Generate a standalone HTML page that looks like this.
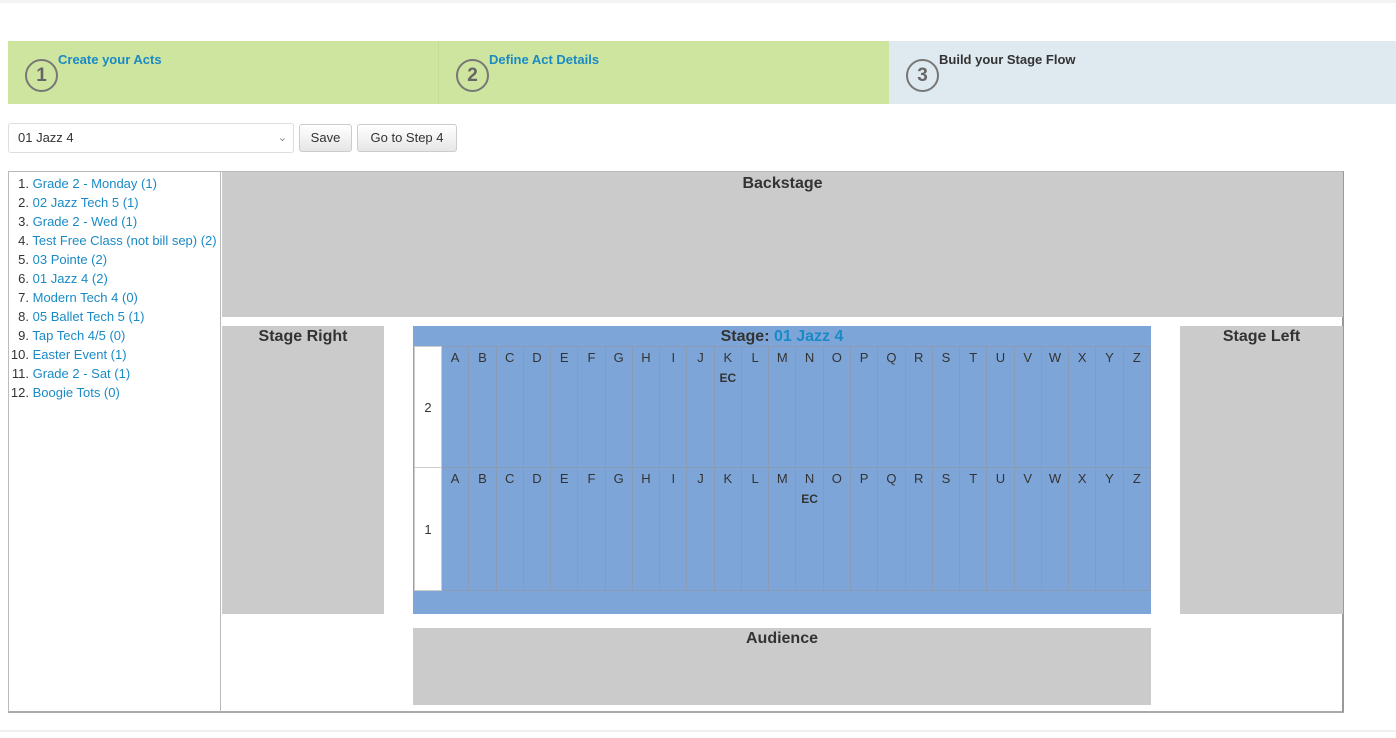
<!DOCTYPE html>
<html><head><meta charset="utf-8"><style>
*{box-sizing:border-box;margin:0;padding:0}
body{width:1396px;height:738px;background:#fff;font-family:"Liberation Sans",Arial,sans-serif;position:relative;overflow:hidden;color:#333}
.a{position:absolute}
.topline{left:0;top:0;width:1396px;height:3px;background:#f3f3f3}
.step{top:41px;height:63px}
.circ{width:33px;height:33px;border:2px solid #777;border-radius:50%;font-weight:bold;font-size:19px;color:#666;text-align:center;line-height:29px}
.stt{font-weight:bold;font-size:13px}
.btn{top:124px;height:28px;border:1px solid #ccc;border-radius:3px;background:linear-gradient(#fff,#e6e6e6);font-size:13px;text-align:center;line-height:26px;color:#333}
.grey{background:#cbcbcb;text-align:center;font-weight:bold;font-size:16px;color:#333}
.li{font-size:13px;height:19px;line-height:19px;white-space:nowrap}
.li span{display:inline-block;width:22px;text-align:right;color:#333}
.li a{color:#1a8ac6;text-decoration:none}
table{border-collapse:collapse;table-layout:fixed}
td{border:1px solid #8a9bb5;font-size:13px;color:#333;text-align:center;vertical-align:top;padding-top:3px}
td.rl{background:#fff;width:27px;vertical-align:middle;padding:0;border-color:#ccc}
td b{display:block;font-size:12px;margin-top:6px}
</style></head><body>
<div class="a topline"></div>
<div class="a step" style="left:8px;width:430px;background:#cde59e"></div>
<div class="a step" style="left:438px;width:451px;background:#cde59e;border-left:1px solid #c4dc96"></div>
<div class="a step" style="left:889px;width:507px;background:#dfe9f0"></div>
<div class="a circ" style="left:25px;top:59px">1</div>
<div class="a stt" style="left:58px;top:52px;color:#1a8ac6">Create your Acts</div>
<div class="a circ" style="left:456px;top:59px">2</div>
<div class="a stt" style="left:489px;top:52px;color:#1a8ac6">Define Act Details</div>
<div class="a circ" style="left:906px;top:59px">3</div>
<div class="a stt" style="left:939px;top:52px;color:#333">Build your Stage Flow</div>

<div class="a" style="left:8px;top:123px;width:286px;height:30px;border:1px solid #ddd;border-radius:3px;font-size:13px;line-height:28px;padding-left:9px">01 Jazz 4<span class="a" style="right:6px;top:0;color:#888;font-size:11px">&#8964;</span></div>
<div class="a btn" style="left:299px;width:53px">Save</div>
<div class="a btn" style="left:357px;width:100px">Go to Step 4</div>

<div class="a" style="left:8px;top:171px;width:1336px;height:542px;border:1px solid #bbb;border-bottom:2px solid #aaa;border-right:2px solid #999"></div>
<div class="a" style="left:220px;top:172px;width:1px;height:540px;background:#bbb"></div>
<div class="a" style="left:7px;top:174px">
<div class="li"><span>1.</span> <a>Grade 2 - Monday (1)</a></div>
<div class="li"><span>2.</span> <a>02 Jazz Tech 5 (1)</a></div>
<div class="li"><span>3.</span> <a>Grade 2 - Wed (1)</a></div>
<div class="li"><span>4.</span> <a>Test Free Class (not bill sep) (2)</a></div>
<div class="li"><span>5.</span> <a>03 Pointe (2)</a></div>
<div class="li"><span>6.</span> <a>01 Jazz 4 (2)</a></div>
<div class="li"><span>7.</span> <a>Modern Tech 4 (0)</a></div>
<div class="li"><span>8.</span> <a>05 Ballet Tech 5 (1)</a></div>
<div class="li"><span>9.</span> <a>Tap Tech 4/5 (0)</a></div>
<div class="li"><span>10.</span> <a>Easter Event (1)</a></div>
<div class="li"><span>11.</span> <a>Grade 2 - Sat (1)</a></div>
<div class="li"><span>12.</span> <a>Boogie Tots (0)</a></div>
</div>

<div class="a grey" style="left:222px;top:172px;width:1121px;height:145px;padding-top:3px">Backstage</div>
<div class="a grey" style="left:222px;top:326px;width:162px;height:288px;padding-top:2px">Stage Right</div>
<div class="a grey" style="left:1180px;top:326px;width:163px;height:288px;padding-top:2px">Stage Left</div>
<div class="a grey" style="left:413px;top:628px;width:738px;height:77px;padding-top:2px">Audience</div>

<div class="a" style="left:413px;top:326px;width:738px;height:288px;background:#7ea5d7">
<div style="height:20px;text-align:center;font-weight:bold;font-size:16px;line-height:21px;color:#333">Stage: <span style="color:#1a8ac6">01 Jazz 4</span></div>
<table style="width:737px;margin-left:1px">
<tr style="height:121px"><td class="rl">2</td>
<td>A</td><td>B</td><td>C</td><td>D</td><td>E</td><td>F</td><td>G</td><td>H</td><td>I</td><td>J</td><td>K<b>EC</b></td><td>L</td><td>M</td><td>N</td><td>O</td><td>P</td><td>Q</td><td>R</td><td>S</td><td>T</td><td>U</td><td>V</td><td>W</td><td>X</td><td>Y</td><td>Z</td></tr>
<tr style="height:123px"><td class="rl">1</td>
<td>A</td><td>B</td><td>C</td><td>D</td><td>E</td><td>F</td><td>G</td><td>H</td><td>I</td><td>J</td><td>K</td><td>L</td><td>M</td><td>N<b>EC</b></td><td>O</td><td>P</td><td>Q</td><td>R</td><td>S</td><td>T</td><td>U</td><td>V</td><td>W</td><td>X</td><td>Y</td><td>Z</td></tr>
</table>
</div>
<div class="a" style="left:0;top:730px;width:1396px;height:2px;background:#f0f0f0"></div>
</body></html>
